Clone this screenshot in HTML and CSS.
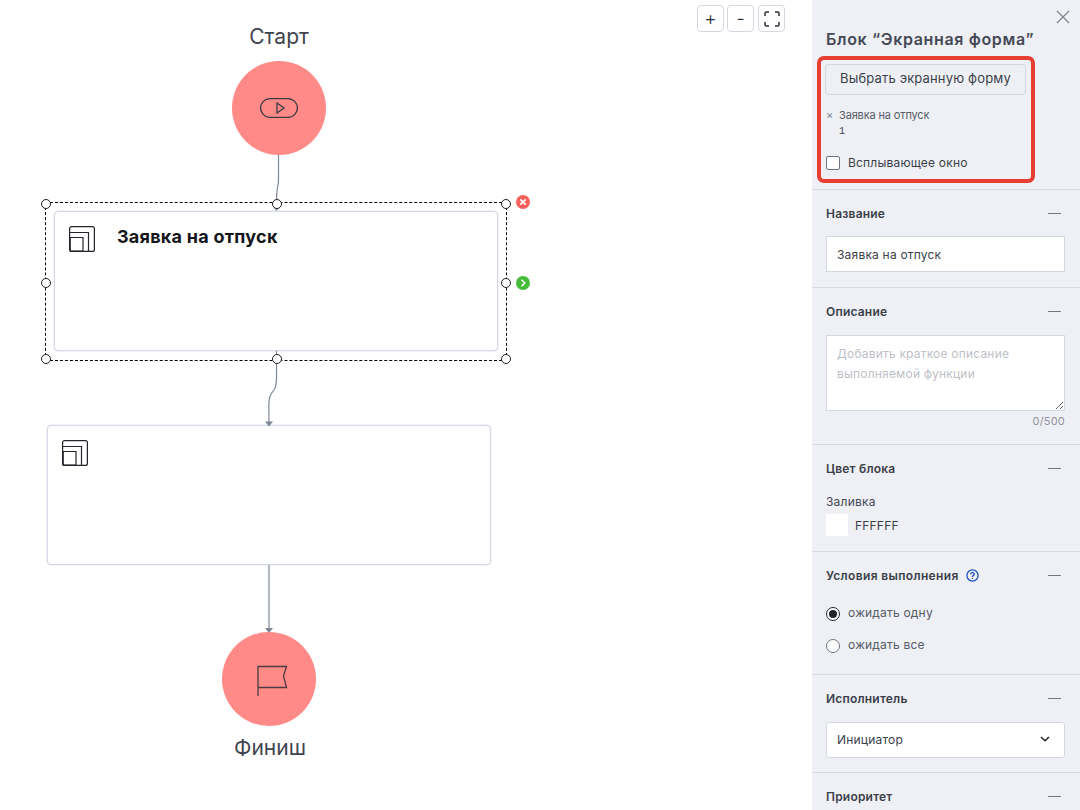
FILE: index.html
```html
<!DOCTYPE html>
<html lang="ru">
<head>
<meta charset="utf-8">
<title>Блок “Экранная форма”</title>
<link rel="stylesheet" href="styles.css">
</head>
<body>
<div class="app">
  <main class="canvas">
    <svg class="wires" width="812" height="810" viewBox="0 0 812 810" fill="none">
      <path d="M278.500 155V178C278.500 190 276.500 182 276.500 204" stroke="#7e8799" stroke-width="1.200"/>
      <path d="M273 206.500L280 206.500L276.500 211Z" fill="#7e8799"/>
      <path d="M276.500 351V378C276.500 396 268.900 388 268.900 404V422" stroke="#7e8799" stroke-width="1.200"/>
      <path d="M265 421.500L273 421.500L269 426.500Z" fill="#7e8799"/>
      <path d="M269 565V628" stroke="#7e8799" stroke-width="1.200"/>
      <path d="M265 628L273 628L269 633Z" fill="#7e8799"/>
    </svg>

    <div class="zoom-tools">
      <button class="tool">+</button>
      <button class="tool">-</button>
      <button class="tool">
        <svg width="16" height="16" viewBox="0 0 16 16" fill="none" stroke="#2b2f38" stroke-width="1.500"><path d="M1 5V2.500Q1 1 2.500 1H5M11 1H13.500Q15 1 15 2.500V5M15 11V13.500Q15 15 13.500 15H11M5 15H2.500Q1 15 1 13.500V11"/></svg>
      </button>
    </div>

    <div class="terminal start-label">Старт</div>
    <div class="circle start-circle">
      <svg width="38" height="20" viewBox="0 0 38 20" fill="none" stroke="#3b3b42" stroke-width="1.300"><rect x="0.600" y="0.600" width="36.800" height="18.800" rx="9.400"/><path d="M17 5L24 10L17 15Z"/></svg>
    </div>

    <div class="node node-one">
      <svg class="node-icon" width="26" height="26" viewBox="0 0 26 26" fill="none" stroke="#22252b" stroke-width="1.200"><rect x="0.600" y="0.600" width="24.800" height="24.800" rx="2"/><path d="M0.600 6.500H19.500V25.400"/><path d="M1 11.500H14V25"/><path d="M1 11.500V24Q1 25.400 2.500 25.400H14" stroke-width="1.600"/></svg>
      <div class="node-title">Заявка на отпуск</div>
    </div>
    <div class="selection">
      <span class="handle h-tl"></span><span class="handle h-tc"></span><span class="handle h-tr"></span>
      <span class="handle h-ml"></span><span class="handle h-mr"></span>
      <span class="handle h-bl"></span><span class="handle h-bc"></span><span class="handle h-br"></span>
    </div>
    <div class="badge badge-del">
      <svg width="14" height="14" viewBox="0 0 14 14" fill="none" stroke="#fff" stroke-width="1.700"><path d="M4.300 4.300L9.700 9.700M9.700 4.300L4.300 9.700"/></svg>
    </div>
    <div class="badge badge-go">
      <svg width="14" height="14" viewBox="0 0 14 14" fill="none" stroke="#fff" stroke-width="1.500"><path d="M5.500 3.800L8.800 7L5.500 10.200"/></svg>
    </div>

    <div class="node node-two">
      <svg class="node-icon" width="26" height="26" viewBox="0 0 26 26" fill="none" stroke="#22252b" stroke-width="1.200"><rect x="0.600" y="0.600" width="24.800" height="24.800" rx="2"/><path d="M0.600 6.500H19.500V25.400"/><path d="M1 11.500H14V25"/><path d="M1 11.500V24Q1 25.400 2.500 25.400H14" stroke-width="1.600"/></svg>
    </div>

    <div class="circle finish-circle">
      <svg width="32" height="32" viewBox="0 0 32 32" fill="none" stroke="#4a3c40" stroke-width="1.300"><path d="M2 31V1.500H30.500L27.500 11L30.500 22.500H2"/></svg>
    </div>
    <div class="terminal finish-label">Финиш</div>
  </main>

  <aside class="panel">
    <button class="close" aria-label="Закрыть">
      <svg width="14" height="14" viewBox="0 0 14 14" fill="none" stroke="#7d8390" stroke-width="1.200"><path d="M1 1L13 13M13 1L1 13"/></svg>
    </button>
    <section class="section first">
      <h2 class="panel-title">Блок “Экранная форма”</h2>
      <button class="pick">Выбрать экранную форму</button>
      <div class="picked">
        <span class="picked-x">×</span><span class="picked-name">Заявка на отпуск</span>
      </div>
      <div class="picked-num">1</div>
      <label class="check"><span class="box"></span>Всплывающее окно</label>
      <div class="highlight"></div>
    </section>

    <section class="section s-name">
      <div class="head"><span>Название</span><i class="dash"></i></div>
      <div class="field">Заявка на отпуск</div>
    </section>

    <section class="section s-desc">
      <div class="head"><span>Описание</span><i class="dash"></i></div>
      <textarea class="area" placeholder="Добавить краткое описание выполняемой функции"></textarea>
      <div class="count">0/500</div>
    </section>

    <section class="section s-color">
      <div class="head"><span>Цвет блока</span><i class="dash"></i></div>
      <div class="fill-label">Заливка</div>
      <div class="fill"><span class="swatch"></span><span>FFFFFF</span></div>
    </section>

    <section class="section s-cond">
      <div class="head">
        <span class="head-help">Условия выполнения
          <svg width="13" height="13" viewBox="0 0 13 13" fill="none" stroke="#1a4fc0" stroke-width="1.300"><circle cx="6.500" cy="6.500" r="5.600"/><path d="M4.700 5.200C4.700 3 8.300 3 8.300 5.100C8.300 6.400 6.500 6.400 6.500 7.900"/><path d="M6.500 9.100V10"/></svg>
        </span>
        <i class="dash"></i>
      </div>
      <div class="radios">
        <label class="radio"><span class="dot on"></span>ожидать одну</label>
        <label class="radio"><span class="dot"></span>ожидать все</label>
      </div>
    </section>

    <section class="section s-exec">
      <div class="head"><span>Исполнитель</span><i class="dash"></i></div>
      <div class="field select">Инициатор
        <svg width="10" height="6" viewBox="0 0 10 6" fill="none" stroke="#22252b" stroke-width="1.500"><path d="M1 1L5 4.800L9 1"/></svg>
      </div>
    </section>

    <section class="section s-prio">
      <div class="head"><span>Приоритет</span><i class="dash"></i></div>
    </section>
  </aside>
</div>
</body>
</html>
```
FILE: styles.css
```css
* { box-sizing: border-box; }
html, body { margin: 0; height: 100%; overflow: hidden; background: #fff; }
body { font-family: Inter, "Noto Sans", sans-serif; color: #3a3f4a; }
.app { display: flex; width: 1080px; height: 810px; }

.canvas { position: relative; width: 812px; height: 810px; flex: none; background: #fff; overflow: hidden; }
.wires { position: absolute; left: 0; top: 0; z-index: 1; }

.zoom-tools { position: absolute; left: 697px; top: 5px; display: flex; gap: 3px; }
.tool {
  width: 27px; height: 27px; padding: 0; display: flex; align-items: center; justify-content: center;
  background: #fff; border: 1px solid #d5d9e4; border-radius: 4px;
  font: 300 19px/1 Inter, sans-serif; color: #2b2f38;
}
.tool:last-child { margin-left: 1px; }

.terminal { position: absolute; font-size: 21px; line-height: 24px; color: #3f4450; text-align: center; width: 120px; }
.start-label { left: 219px; top: 25px; }
.finish-label { left: 210px; top: 736px; }
.circle { position: absolute; width: 94px; height: 94px; border-radius: 50%; background: #ff8a87; display: flex; align-items: center; justify-content: center; z-index: 2; }
.start-circle { left: 232px; top: 61px; }
.finish-circle { left: 222px; top: 632px; }
.finish-circle svg { margin-left: 5px; margin-top: 4px; }

.node { position: absolute; width: 444px; height: 140px; background: #fff; border: 1px solid #d5d9e6; border-radius: 4px; box-shadow: 0 0 0 .5px #e6e9f0; }
.node-one { left: 54px; top: 211px; display: flex; align-items: flex-start; gap: 22px; padding: 14px 14px; }
.node-two { left: 47px; top: 425px; padding: 14px 14px; }
.node-icon { display: block; flex: none; }
.node-title { margin-top: -1px; font-size: 18px; font-weight: 700; line-height: 24px; color: #14161b; letter-spacing: .25px; }

.selection { position: absolute; left: 45px; top: 202px; width: 462px; height: 159px; border: 1px dashed #000; z-index: 3; }
.handle { position: absolute; width: 10px; height: 10px; border: 1px solid #222; background: #fff; border-radius: 50%; }
.h-tl { left: -5px; top: -4px; }
.h-tc { left: 226px; top: -4px; }
.h-tr { left: 455px; top: -4px; }
.h-ml { left: -5px; top: 75px; }
.h-mr { left: 455px; top: 75px; }
.h-bl { left: -5px; top: 151px; }
.h-bc { left: 226px; top: 151px; }
.h-br { left: 455px; top: 151px; }

.badge { position: absolute; left: 516px; width: 14px; height: 14px; border-radius: 50%; display: flex; z-index: 3; }
.badge-del { top: 195px; background: #f9605c; }
.badge-go { top: 276px; background: #46bd3a; }

.panel { position: relative; width: 268px; height: 810px; flex: none; background: #eff0f5; overflow: hidden; }
.close { position: absolute; right: 10px; top: 10px; width: 14px; height: 14px; padding: 0; border: 0; background: none; display: flex; }

.section { position: relative; padding: 11px 15px 0 14px; border-bottom: 1px solid #d7dae4; }
.first { height: 190px; padding-top: 28px; }
.s-name { height: 98px; }
.s-desc { height: 157px; }
.s-color { height: 107px; }
.s-cond { height: 123px; }
.s-exec { height: 98px; }
.s-prio { border-bottom: 0; }

.panel-title { margin: 0; font-size: 16px; font-weight: 600; line-height: 22px; color: #444955; letter-spacing: .65px; white-space: nowrap; }
.pick {
  display: block; width: 201px; height: 31px; margin: 14px 0 0 -1px; padding: 0 0 2px;
  background: #eff0f5; border: 1px solid #d2d6e1; border-radius: 4px;
  font: 400 13px/1 Inter, sans-serif; color: #3a3f4a; letter-spacing: .15px;
}
.picked { display: flex; align-items: center; margin-top: 13px; height: 14px; font-size: 11px; color: #555b68; letter-spacing: -.15px; }
.picked-x { width: 13px; color: #7d8390; font-size: 11px; }
.picked-num { margin: 3px 0 0 13px; font-family: "Liberation Mono", monospace; font-size: 10px; line-height: 14px; color: #3b4258; }
.check { display: flex; align-items: center; gap: 8px; margin-top: 16px; font-size: 12px; line-height: 16px; color: #3a3f4a; letter-spacing: .2px; }
.box { width: 14px; height: 14px; background: #fff; border: 1px solid #6d7486; border-radius: 2px; }
.highlight { position: absolute; left: 5px; top: 56px; width: 218px; height: 127px; border: 4px solid #e63e32; border-radius: 7px; pointer-events: none; }

.head { display: flex; justify-content: space-between; align-items: center; height: 24px; font-size: 12px; font-weight: 600; color: #3a3f4a; letter-spacing: .2px; }
.head-help { display: flex; align-items: center; gap: 7px; letter-spacing: .35px; }
.dash { display: block; width: 13px; height: 1px; background: #737987; margin-right: 4px; }

.field { height: 36px; margin-top: 11px; padding: 0 10px; display: flex; align-items: center; background: #fff; border: 1px solid #d5d9e4; font-size: 12px; color: #3a3f4a; letter-spacing: .2px; }
.select { justify-content: space-between; border-radius: 3px; padding: 0 14px 2px 10px; margin-top: 12px; }

.area {
  display: block; width: 239px; height: 76px; margin-top: 12px; padding: 8px 10px;
  background: #fff; border: 1px solid #d5d9e4; border-radius: 0; resize: vertical; outline: 0;
  font: 400 12px/20px Inter, sans-serif; letter-spacing: .2px; color: #3a3f4a;
}
.area::placeholder { color: #bdbfc6; opacity: 1; }
.count { margin-top: 3px; text-align: right; font-size: 11px; line-height: 14px; color: #8f93a0; letter-spacing: .2px; }

.fill-label { margin-top: 14px; font-size: 12px; line-height: 16px; letter-spacing: .2px; color: #444955; }
.fill { display: flex; align-items: center; gap: 7px; margin-top: 4px; font-size: 12px; color: #3a3f4a; letter-spacing: .2px; }
.swatch { width: 22px; height: 22px; background: #fff; }

.radios { display: flex; flex-direction: column; gap: 16px; margin-top: 16px; padding-top: 1px; }
.radio { display: flex; align-items: center; gap: 8px; height: 16px; font-size: 12px; color: #555b68; letter-spacing: .2px; }
.dot { position: relative; width: 14px; height: 14px; margin-top: 4px; background: #fff; border: 1px solid #6d7486; border-radius: 50%; }
.dot.on { border-color: #22252b; }
.dot.on::after { content: ""; position: absolute; left: 2px; top: 2px; width: 8px; height: 8px; border-radius: 50%; background: #22252b; }
```
